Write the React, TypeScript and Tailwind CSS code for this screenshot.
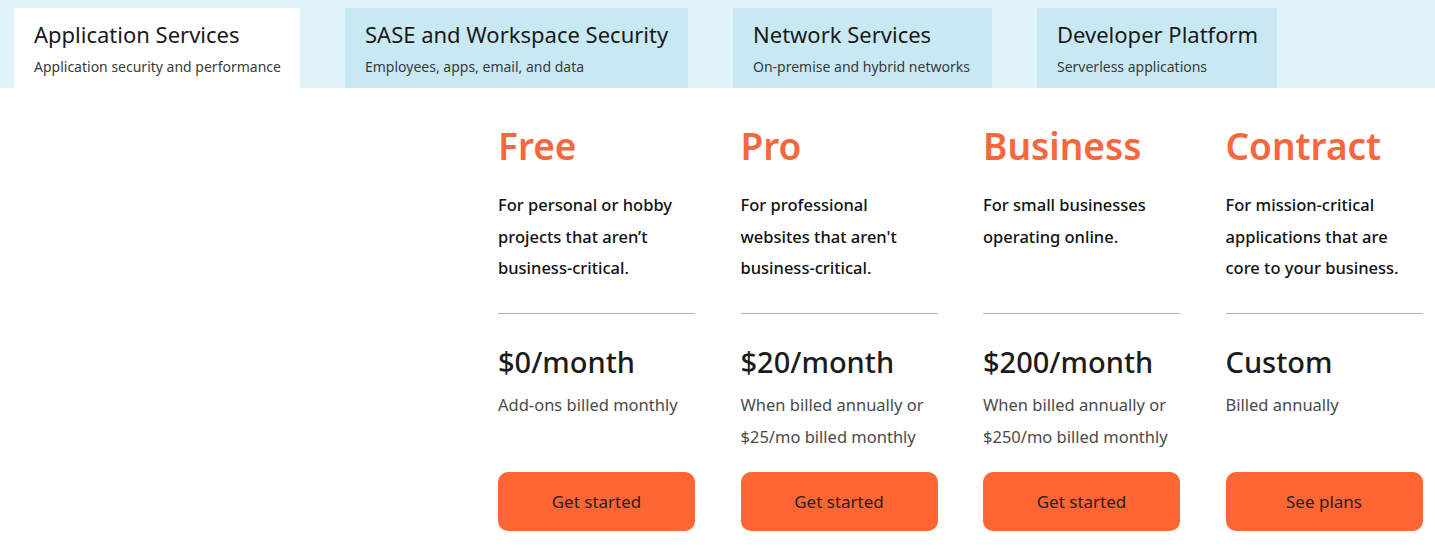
const tabs = [
  { title: 'Application Services', sub: 'Application security and performance', active: true, w: 'w-[286px]' },
  { title: 'SASE and Workspace Security', sub: 'Employees, apps, email, and data', active: false, w: 'w-[343px]' },
  { title: 'Network Services', sub: 'On-premise and hybrid networks', active: false, w: 'w-[259px]' },
  { title: 'Developer Platform', sub: 'Serverless applications', active: false, w: 'w-[240px]' },
]

const plans = [
  {
    name: 'Free',
    desc: ['For personal or hobby', 'projects that aren’t', 'business-critical.'],
    price: '$0/month',
    note: ['Add-ons billed monthly'],
    cta: 'Get started',
  },
  {
    name: 'Pro',
    desc: ['For professional', "websites that aren't", 'business-critical.'],
    price: '$20/month',
    note: ['When billed annually or', '$25/mo billed monthly'],
    cta: 'Get started',
  },
  {
    name: 'Business',
    desc: ['For small businesses', 'operating online.'],
    price: '$200/month',
    note: ['When billed annually or', '$250/mo billed monthly'],
    cta: 'Get started',
  },
  {
    name: 'Contract',
    desc: ['For mission-critical', 'applications that are', 'core to your business.'],
    price: 'Custom',
    note: ['Billed annually'],
    cta: 'See plans',
  },
]

export default function App() {
  return (
    <div className="min-h-[554px] bg-white font-['Noto_Sans','Open_Sans',sans-serif] text-[#1b1b1b]">
      <div className="flex h-[88px] gap-[45px] bg-[#e0f2fa] pl-[14px] pt-[8px]">
        {tabs.map((t) => (
          <div
            key={t.title}
            className={`${t.w} h-[80px] pl-[20px] pt-[12px] ${t.active ? 'bg-white' : 'bg-[#c8e9f4]'}`}
          >
            <div className="text-[22px] leading-[28px] text-[#1a1a1a]">{t.title}</div>
            <div className="mt-[9px] text-[14px] leading-[20px] text-[#3a3a3a]">{t.sub}</div>
          </div>
        ))}
      </div>

      <div className="ml-[498px] grid grid-cols-[repeat(4,197px)] gap-x-[45.5px] pt-[33px]">
        {plans.map((p) => (
          <div key={p.name} className="flex flex-col">
            <div className="h-[50px] text-[37px] font-semibold leading-[50px] text-[#f6673d]">{p.name}</div>
            <div className="mt-[18px] h-[96px] text-[16.5px] font-medium leading-[31.5px] text-[#111]">
              {p.desc.map((l) => (
                <div key={l}>{l}</div>
              ))}
            </div>
            <div className="mt-[28px] h-px bg-[#b3b3b3]" />
            <div className="mt-[28px] text-[29px] font-medium leading-[40px] text-[#1b1b1b]">{p.price}</div>
            <div className="mt-[7px] h-[64px] text-[16.5px] leading-[31.5px] text-[#4a4a4a]">
              {p.note.map((l) => (
                <div key={l}>{l}</div>
              ))}
            </div>
            <button className="mt-[19px] h-[59px] rounded-[10px] bg-[#ff6633] text-[17px] text-[#1f1f1f]">
              {p.cta}
            </button>
          </div>
        ))}
      </div>
    </div>
  )
}
